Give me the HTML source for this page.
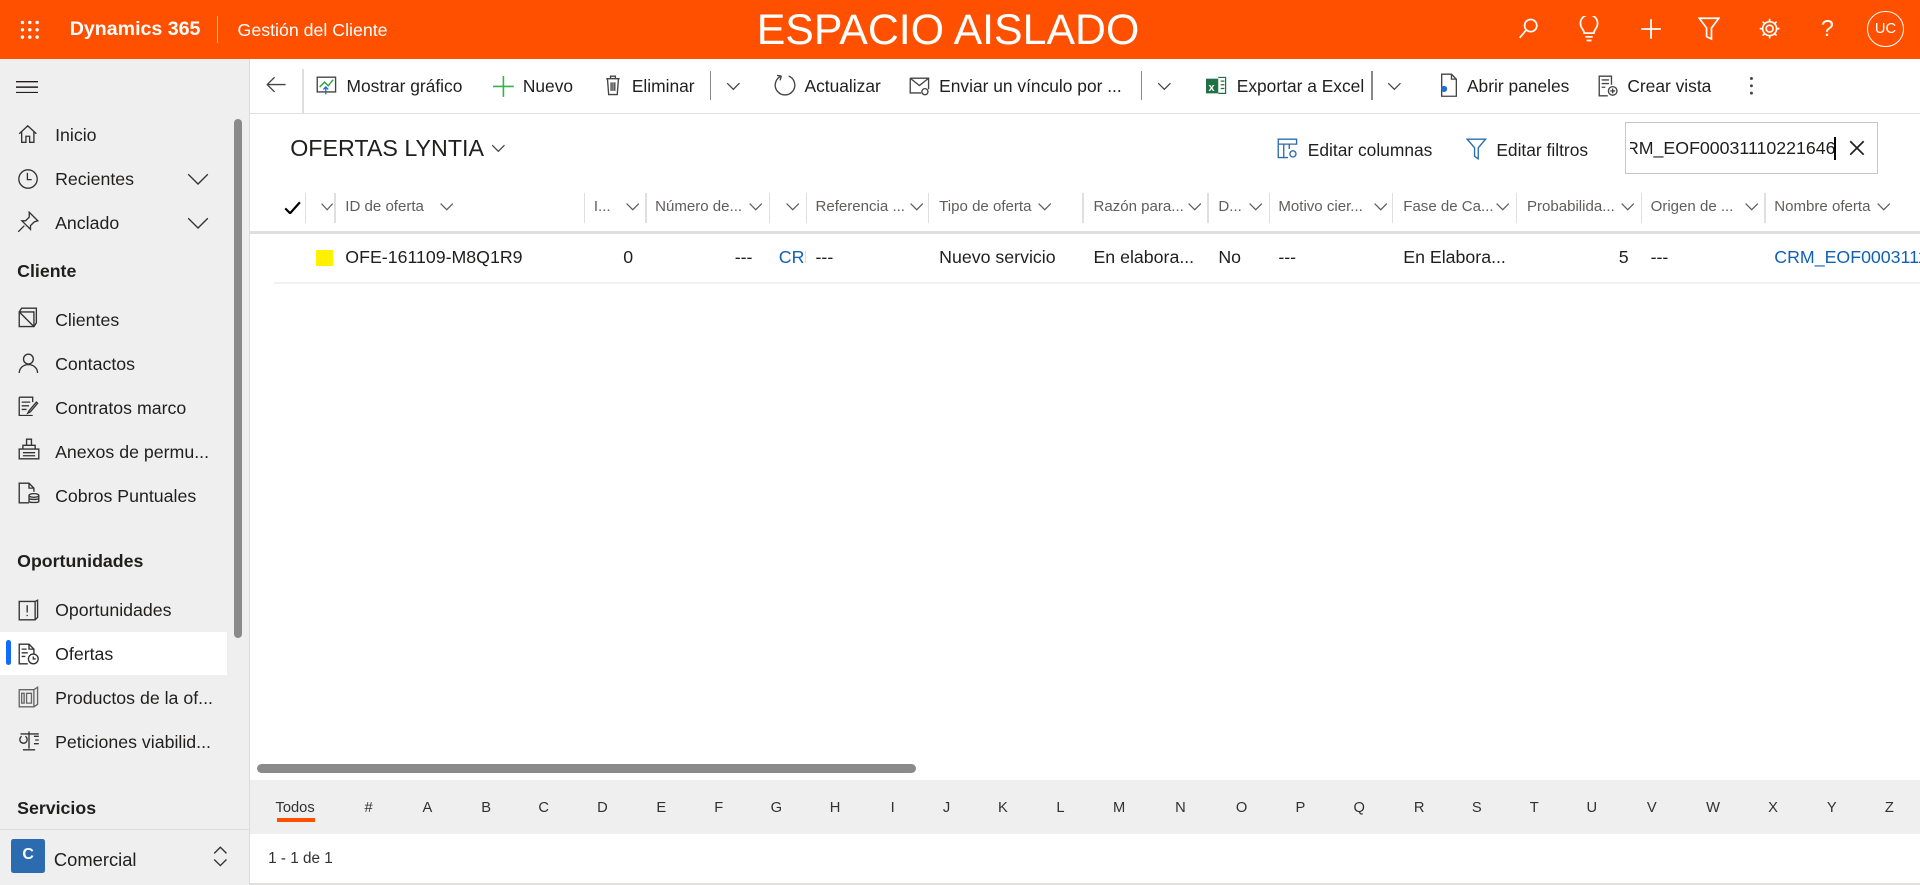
<!DOCTYPE html>
<html><head><meta charset="utf-8">
<style>
html,body{margin:0;padding:0;width:1920px;height:885px;overflow:hidden;background:#fff}
#w{position:relative;width:1568px;height:723px;zoom:1.2244898;font-family:"Liberation Sans",sans-serif;color:#201f1e;font-size:14px;overflow:hidden}
.a{position:absolute;white-space:nowrap}
.top{left:0;top:0;width:1568px;height:48px;background:#ff5000;color:#fff}
.side{left:0;top:48px;width:203px;height:675px;background:#efefef;border-right:1px solid #dcdcdc}
.ni{font-size:14.5px;color:#201f1e}
.sec{font-size:14.5px;font-weight:bold;color:#201f1e}
.cmd{font-size:14.2px;color:#201f1e}
.hd{font-size:12.3px;color:#605e5c;top:162px}
.sep{top:158px;width:1px;height:24px;background:#e1dfdd}
.chev{top:162px;width:8px;height:8px}
.cell{font-size:14.5px;top:202px}
.let{font-size:12px;color:#323130;top:653px}
svg{position:absolute}
</style></head><body><div id="w">
<div class="a top">
 <svg style="left:16px;top:16px" width="16" height="16" viewBox="0 0 16 16" fill="#fff"><circle cx="2" cy="2" r="1.4"/><circle cx="8" cy="2" r="1.4"/><circle cx="14" cy="2" r="1.4"/><circle cx="2" cy="8" r="1.4"/><circle cx="8" cy="8" r="1.4"/><circle cx="14" cy="8" r="1.4"/><circle cx="2" cy="14" r="1.4"/><circle cx="8" cy="14" r="1.4"/><circle cx="14" cy="14" r="1.4"/></svg>
 <div class="a" style="left:57px;top:15px;font-size:16px;font-weight:bold">Dynamics 365</div>
 <div class="a" style="left:177px;top:13px;width:1px;height:22px;background:#ffb38f"></div>
 <div class="a" style="left:194px;top:16px;font-size:14.5px">Gestión del Cliente</div>
 <div class="a" style="left:618px;top:5px;font-size:35px;letter-spacing:0px">ESPACIO AISLADO</div>
 <svg style="left:1238px;top:14px" width="20" height="20" viewBox="0 0 20 20" fill="none" stroke="#fff" stroke-width="1.4"><circle cx="12" cy="7" r="5"/><path d="M8.5 10.5 3 17"/></svg>
 <svg style="left:1289px;top:13px" width="18" height="22" viewBox="0 0 18 22" fill="none" stroke="#fff" stroke-width="1.4"><path d="M5 14c0-3-3-4-3-8a7 7 0 0 1 14 0c0 4-3 5-3 8z M6 17h6 M7 20h4"/></svg>
 <svg style="left:1339px;top:15px" width="18" height="18" viewBox="0 0 18 18" stroke="#fff" stroke-width="1.5"><path d="M9 1v16M1 9h16"/></svg>
 <svg style="left:1387px;top:14px" width="18" height="20" viewBox="0 0 18 20" fill="none" stroke="#fff" stroke-width="1.4"><path d="M1 1h16l-6 8v9l-4-2V9z"/></svg>
 <svg style="left:1436px;top:14px" width="19" height="19" viewBox="0 0 20 20" fill="none" stroke="#fff" stroke-width="1.4"><circle cx="10" cy="10" r="3"/><path d="M10 1.5v3M10 15.5v3M1.5 10h3M15.5 10h3M4 4l2 2M14 14l2 2M4 16l2-2M14 6l2-2"/><circle cx="10" cy="10" r="6"/></svg>
 <div class="a" style="left:1487px;top:12px;font-size:19px">?</div>
 <div class="a" style="left:1525px;top:9px;width:28px;height:28px;border:1px solid #fff;border-radius:50%;font-size:12px;text-align:center;line-height:28px">UC</div>
</div>

<div class="a side">
 <svg style="left:13px;top:18px" width="18" height="10" viewBox="0 0 18 10" stroke="#201f1e" stroke-width="1.2"><path d="M0 .5h18M0 5h18M0 9.5h18"/></svg>
 <div class="a" style="left:191px;top:49px;width:7px;height:424px;background:#8a8a8a;border-radius:4px"></div>
 <svg style="left:15px;top:53px" width="16" height="16" viewBox="0 0 16 16" fill="none" stroke="#333" stroke-width="1.1"><path d="M1 8 8 1.5 15 8M3 6.5V15h3.5v-5h3v5H13V6.5"/></svg>
 <div class="a ni" style="left:45px;top:54px">Inicio</div>
 <svg style="left:14px;top:89px" width="18" height="18" viewBox="0 0 18 18" fill="none" stroke="#333" stroke-width="1.1"><circle cx="9" cy="9" r="7.5"/><path d="M8.5 4v5.5H12"/></svg>
 <div class="a ni" style="left:45px;top:90px">Recientes</div>
 <svg style="left:153px;top:93px" width="18" height="10" viewBox="0 0 18 10" fill="none" stroke="#333" stroke-width="1.1"><path d="M1 1l8 8 8-8"/></svg>
 <svg style="left:14px;top:124px" width="18" height="18" viewBox="0 0 18 18" fill="none" stroke="#333" stroke-width="1.1"><path d="M10 1l7 7-3 1-3 3 0 3-7-7 3 0 3-3zM6 12l-5 5"/></svg>
 <div class="a ni" style="left:45px;top:126px">Anclado</div>
 <svg style="left:153px;top:129px" width="18" height="10" viewBox="0 0 18 10" fill="none" stroke="#333" stroke-width="1.1"><path d="M1 1l8 8 8-8"/></svg>
 <div class="a sec" style="left:14px;top:165px">Cliente</div>
 <svg style="left:15px;top:203px" width="17" height="17" viewBox="0 0 17 17" fill="none" stroke="#333" stroke-width="1.1"><path d="M1 4h12v12H1zM1 4 3 1h12v12l-2 3M1 4l12 12"/></svg>
 <div class="a ni" style="left:45px;top:205px">Clientes</div>
 <svg style="left:15px;top:240px" width="17" height="17" viewBox="0 0 17 17" fill="none" stroke="#333" stroke-width="1.1"><circle cx="8.5" cy="5" r="4"/><path d="M1 16.5c0-4 3-7 7.5-7s7.5 3 7.5 7"/></svg>
 <div class="a ni" style="left:45px;top:241px">Contactos</div>
 <svg style="left:15px;top:275px" width="18" height="17" viewBox="0 0 18 17" fill="none" stroke="#333" stroke-width="1.1"><path d="M1 1h11v4M1 1v15h11M3 5h7M3 8h6M3 11h4M16 6l-6 7-2 1 1-2 6-7z"/></svg>
 <div class="a ni" style="left:45px;top:277px">Contratos marco</div>
 <svg style="left:15px;top:310px" width="18" height="18" viewBox="0 0 18 18" fill="none" stroke="#333" stroke-width="1.1"><path d="M1 9h16v8H1zM4 9V6h10v3M7 6V1h4v5M4 12h10M4 14.5h10"/></svg>
 <div class="a ni" style="left:45px;top:313px">Anexos de permu...</div>
 <svg style="left:15px;top:346px" width="18" height="18" viewBox="0 0 18 18" fill="none" stroke="#333" stroke-width="1.1"><path d="M9 17H1V1h8l4 4v3M9 1v4h4"/><ellipse cx="13" cy="11" rx="4" ry="1.5"/><path d="M9 11v5c0 1 8 1 8 0v-5M9 13.5c0 1 8 1 8 0"/></svg>
 <div class="a ni" style="left:45px;top:349px">Cobros Puntuales</div>
 <div class="a sec" style="left:14px;top:402px">Oportunidades</div>
 <svg style="left:15px;top:441px" width="17" height="18" viewBox="0 0 17 18" fill="none" stroke="#333" stroke-width="1.1"><path d="M1 2h13v15H1zM14 2l2-1v14l-2 2M7.5 5v6M7.5 13v1"/></svg>
 <div class="a ni" style="left:45px;top:442px">Oportunidades</div>
 <div class="a" style="left:0;top:468px;width:185px;height:35px;background:#fff"></div>
 <div class="a" style="left:5px;top:475px;width:4px;height:20px;background:#0f6cff;border-radius:2px"></div>
 <svg style="left:15px;top:477px" width="18" height="18" viewBox="0 0 18 18" fill="none" stroke="#333" stroke-width="1.1"><path d="M8 17H1V1h8l4 4v4M9 1v4h4M3 5h4M3 8h5M3 11h3"/><circle cx="12.5" cy="13" r="4"/><path d="M12.5 11v2h2"/></svg>
 <div class="a ni" style="left:45px;top:478px">Ofertas</div>
 <svg style="left:15px;top:512px" width="18" height="18" viewBox="0 0 18 18" fill="none" stroke="#666" stroke-width="1.1"><path d="M1 3h12v14H1zM13 3l3-2v14l-3 2M3 6h2v8H3zM7 6h4v8H7z"/></svg>
 <div class="a ni" style="left:45px;top:514px">Productos de la of...</div>
 <svg style="left:15px;top:547px" width="19" height="19" viewBox="0 0 19 19" fill="none" stroke="#333" stroke-width="1.1"><path d="M9 2v14M2 4h15M4 17h10M3 6a3 3 0 1 0 3 0M13 6h4M14 9h3M13 12h4"/></svg>
 <div class="a ni" style="left:45px;top:550px">Peticiones viabilid...</div>
 <div class="a sec" style="left:14px;top:604px">Servicios</div>
 <div class="a" style="left:0;top:629px;width:203px;height:1px;background:#dcdcdc"></div>
 <div class="a" style="left:9px;top:637px;width:28px;height:28px;background:#2b6cb0;border-radius:2px;color:#fff;font-size:13px;font-weight:bold;text-align:center;line-height:26px">C</div>
 <div class="a ni" style="left:44px;top:645px;font-size:15px">Comercial</div>
 <svg style="left:174px;top:643px" width="12" height="17" viewBox="0 0 12 17" fill="none" stroke="#333" stroke-width="1.1"><path d="M1 6l5-5 5 5M1 11l5 5 5-5"/></svg>
</div>

<div class="a" style="left:204px;top:92px;width:1364px;height:1px;background:#e1dfdd"></div>
<div class="a" style="left:247px;top:56px;width:1px;height:36px;background:#e1dfdd"></div>
<svg style="left:217px;top:62px" width="17" height="14" viewBox="0 0 17 14" fill="none" stroke="#444" stroke-width="1.1"><path d="M16 7H1M7 1 1 7l6 6"/></svg>
<svg style="left:258px;top:62px" width="17" height="16" viewBox="0 0 17 16" fill="none" stroke-width="1.1"><path stroke="#444" d="M1 1h15v12H1z"/><path stroke="#2a9d3c" d="M3 9l4-4 3 3 4-5"/><path stroke="#1e6fd9" d="M8 15V9M6 11l2-2 2 2"/></svg>
<div class="a cmd" style="left:283px;top:62px">Mostrar gráfico</div>
<svg style="left:403px;top:62px" width="17" height="17" viewBox="0 0 17 17" stroke="#36b24a" stroke-width="1.3"><path d="M8.5 0v17M0 8.5h17"/></svg>
<div class="a cmd" style="left:427px;top:62px">Nuevo</div>
<svg style="left:494px;top:61px" width="13" height="17" viewBox="0 0 13 17" fill="none" stroke="#444" stroke-width="1.1"><path d="M1 3h11M4.5 3V1h4v2M2 3l1 13h7l1-13M5 6v7M6.5 6v7M8 6v7"/></svg>
<div class="a cmd" style="left:516px;top:62px">Eliminar</div>
<div class="a" style="left:580px;top:58px;width:1px;height:24px;background:#8a8886"></div>
<svg style="left:593px;top:67px" width="12" height="7" viewBox="0 0 12 7" fill="none" stroke="#444"><path d="M1 1l5 5 5-5"/></svg>
<svg style="left:632px;top:60px" width="18" height="19" viewBox="0 0 18 19" fill="none" stroke="#444" stroke-width="1.1"><path d="M6 2.5A8 8 0 1 0 12 2.5M6 2.5 5 6M6 2.5 2.5 2"/></svg>
<div class="a cmd" style="left:657px;top:62px">Actualizar</div>
<svg style="left:742px;top:63px" width="18" height="15" viewBox="0 0 18 15" fill="none" stroke="#444" stroke-width="1.1"><path d="M1 1h15v9M1 1v12h9M1 1l7.5 6L16 1"/><circle cx="13" cy="12" r="2.5"/></svg>
<div class="a cmd" style="left:767px;top:62px">Enviar un vínculo por ...</div>
<div class="a" style="left:932px;top:58px;width:1px;height:24px;background:#8a8886"></div>
<svg style="left:945px;top:67px" width="12" height="7" viewBox="0 0 12 7" fill="none" stroke="#444"><path d="M1 1l5 5 5-5"/></svg>
<svg style="left:985px;top:61px" width="17" height="18" viewBox="0 0 17 18"><rect x="0" y="3" width="10" height="12" fill="#1e7145"/><text x="2" y="13" font-size="9" font-weight="bold" fill="#fff" font-family="Liberation Sans">x</text><path d="M10 2h6v13h-6M12 5h3M12 8h3M12 11h3" fill="none" stroke="#1e7145"/></svg>
<div class="a cmd" style="left:1010px;top:62px">Exportar a Excel</div>
<div class="a" style="left:1120px;top:58px;width:1px;height:24px;background:#8a8886"></div>
<svg style="left:1133px;top:67px" width="12" height="7" viewBox="0 0 12 7" fill="none" stroke="#444"><path d="M1 1l5 5 5-5"/></svg>
<svg style="left:1174px;top:60px" width="16" height="20" viewBox="0 0 16 20" fill="none" stroke-width="1.1"><path stroke="#444" d="M3 1h8l4 4v14H3zM11 1v4h4"/><circle cx="5" cy="13" r="2.5" fill="#1e6fd9"/></svg>
<div class="a cmd" style="left:1198px;top:62px">Abrir paneles</div>
<svg style="left:1305px;top:61px" width="17" height="18" viewBox="0 0 17 18" fill="none" stroke="#444" stroke-width="1.1"><path d="M8 17H1V1h10v7M3 4h6M3 7h6M3 10h3"/><circle cx="12" cy="13" r="3.5"/><path d="M12 11v4M10 13h4"/></svg>
<div class="a cmd" style="left:1329px;top:62px">Crear vista</div>
<svg style="left:1428px;top:62px" width="4" height="16" viewBox="0 0 4 16" fill="#444"><circle cx="2" cy="2" r="1.2"/><circle cx="2" cy="8" r="1.2"/><circle cx="2" cy="14" r="1.2"/></svg>

<div class="a" style="left:237px;top:110px;font-size:19px;color:#201f1e">OFERTAS LYNTIA</div>
<svg style="left:401px;top:118px" width="12" height="7" viewBox="0 0 12 7" fill="none" stroke="#444"><path d="M1 1l5 5 5-5"/></svg>
<svg style="left:1043px;top:113px" width="17" height="17" viewBox="0 0 17 17" fill="none" stroke="#2b6cb0" stroke-width="1.1"><path d="M1 1h15v4H1zM1 5v11h8M5.5 5v11M10 5v4"/><circle cx="13" cy="13" r="2.5"/></svg>
<div class="a cmd" style="left:1068px;top:114px">Editar columnas</div>
<svg style="left:1197px;top:113px" width="17" height="18" viewBox="0 0 17 18" fill="none" stroke="#2b6cb0" stroke-width="1.1"><path d="M1 1h15l-6 7v9l-3-2V8z"/></svg>
<div class="a cmd" style="left:1222px;top:114px">Editar filtros</div>
<div class="a" style="left:1327px;top:100px;width:207px;height:42px;border:1px solid #c8c6c4;box-sizing:border-box"></div>
<div class="a" style="left:1331px;top:113px;width:168px;overflow:hidden;font-size:14.5px;direction:rtl;text-align:left">CRM_EOF0003111022164&#x200E;6</div>
<div class="a" style="left:1498px;top:112px;width:1px;height:19px;background:#000"></div>
<svg style="left:1510px;top:114px" width="13" height="13" viewBox="0 0 13 13" stroke="#201f1e" stroke-width="1.4"><path d="M1 1l11 11M12 1 1 12"/></svg>

<svg style="left:232px;top:164px" width="14" height="11" viewBox="0 0 14 11" fill="none" stroke="#000" stroke-width="1.8"><path d="M1 6l4 4 8-9"/></svg>
<div class="a" style="left:204px;top:189px;width:1364px;height:2px;background:#e1dfdd"></div>
<div id="cols"></div>

<div class="a" style="left:258px;top:204px;width:14px;height:13px;background:#fff100"></div>
<div class="a cell" style="left:282px">OFE-161109-M8Q1R9</div>
<div class="a cell" style="left:509px">0</div>
<div class="a cell" style="left:600px">---</div>
<div class="a cell" style="left:636px;width:22px;overflow:hidden;color:#1160b7">CRM</div>
<div class="a cell" style="left:666px">---</div>
<div class="a cell" style="left:767px">Nuevo servicio</div>
<div class="a cell" style="left:893px">En elabora...</div>
<div class="a cell" style="left:995px">No</div>
<div class="a cell" style="left:1044px">---</div>
<div class="a cell" style="left:1146px">En Elabora...</div>
<div class="a cell" style="left:1322px">5</div>
<div class="a cell" style="left:1348px">---</div>
<div class="a cell" style="left:1449px;width:119px;overflow:hidden;color:#1160b7">CRM_EOF000311102</div>
<div class="a" style="left:224px;top:230px;width:1344px;height:2px;background:#f3f2f1"></div>

<div class="a" style="left:210px;top:624px;width:538px;height:7px;background:#8a8a8a;border-radius:4px"></div>

<div class="a" style="left:204px;top:637px;width:1364px;height:44px;background:#efefef"></div>
<div id="alpha"></div>
<div class="a" style="left:226px;top:668px;width:31px;height:3px;background:#ff5000"></div>
<div class="a" style="left:219px;top:694px;font-size:12.5px;color:#323130">1 - 1 de 1</div>
<div class="a" style="left:204px;top:721px;width:1364px;height:2px;background:#e1dfdd"></div>
</div>
<script>
var cols=[[282,"ID de oferta",364],[485,"I...",516],[535,"Número de...",617],[null,"",647],[666,"Referencia ...",748],[767,"Tipo de oferta",853],[893,"Razón para...",975],[995,"D...",1025],[1044,"Motivo cier...",1127],[1146,"Fase de Ca...",1227],[1247,"Probabilida...",1329],[1348,"Origen de ...",1430],[1449,"Nombre oferta",1538]];
var seps=[249,273,477,527,628,658,758,884,986,1036,1137,1238,1340,1441];
var h="";
h+='<svg style="left:262px;top:166px" width="10" height="6" viewBox="0 0 10 6" fill="none" stroke="#605e5c"><path d="M.5.5l4.5 5 4.5-5"/></svg>';
cols.forEach(function(c){if(c[0]!==null)h+='<div class="a hd" style="left:'+c[0]+'px">'+c[1]+'</div>';
h+='<svg style="left:'+(c[2]-5)+'px;top:166px" width="11" height="6" viewBox="0 0 11 6" fill="none" stroke="#605e5c"><path d="M.5.5l5 5 5-5"/></svg>';});
seps.forEach(function(s){h+='<div class="a sep" style="left:'+s+'px"></div>';});
document.getElementById("cols").outerHTML=h;
var L=[["Todos",241],["#",301],["A",349],["B",397],["C",444],["D",492],["E",540],["F",587],["G",634],["H",682],["I",729],["J",773],["K",819],["L",866],["M",914],["N",964],["O",1014],["P",1062],["Q",1110],["R",1159],["S",1206],["T",1253],["U",1300],["V",1349],["W",1399],["X",1448],["Y",1496],["Z",1543]];
var a="";L.forEach(function(l){a+='<div class="a let" style="left:'+(l[1]-30)+'px;width:60px;text-align:center">'+l[0]+'</div>';});
document.getElementById("alpha").outerHTML=a;
</script>
</body></html>
